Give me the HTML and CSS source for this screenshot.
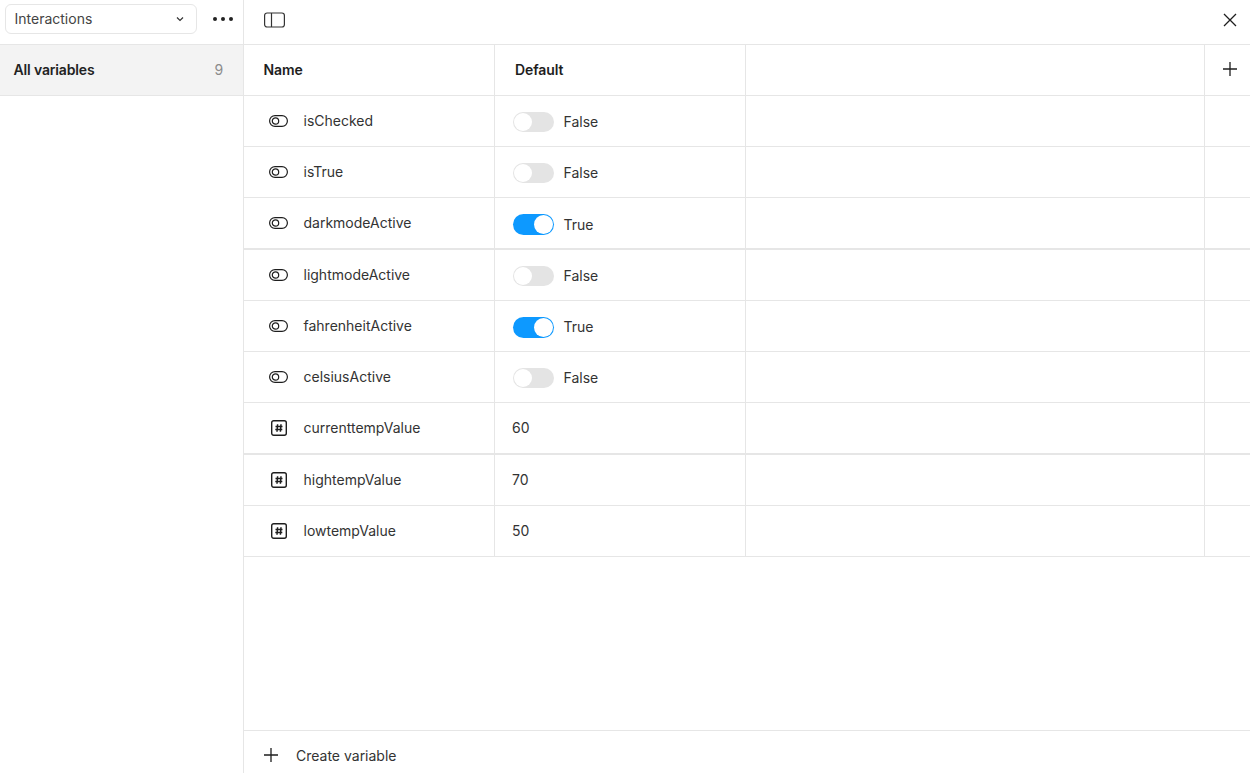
FILE: index.html
```html
<!DOCTYPE html>
<html lang="en">
<head>
<meta charset="utf-8">
<title>Variables</title>
<link rel="stylesheet" href="styles.css">
</head>
<body>
<svg class="defs" width="0" height="0" aria-hidden="true">
  <symbol id="i-bool" viewBox="0 0 19 12"><rect x=".6" y=".6" width="17.8" height="10.8" rx="5.4" fill="none" stroke="currentColor" stroke-width="1.2"/><circle cx="6.5" cy="6" r="3.2" fill="none" stroke="currentColor" stroke-width="1.2"/></symbol>
  <symbol id="i-num" viewBox="0 0 16 16"><rect x=".7" y=".7" width="14.6" height="14.6" rx="2" fill="none" stroke="currentColor" stroke-width="1.4"/><path d="M6.6 4.2 6 11.8M10 4.2l-.6 7.6M4.5 6.5h7M4.3 9.5h7" fill="none" stroke="currentColor" stroke-width="1.5"/></symbol>
  <symbol id="i-plus" viewBox="0 0 14 14"><path d="M7 0v14M0 7h14" fill="none" stroke="currentColor" stroke-width="1.3"/></symbol>
</svg>
<div class="app">
  <aside class="side">
    <div class="side-top">
      <button class="select"><span>Interactions</span>
        <svg width="8" height="6" viewBox="0 0 8 6"><path d="M1 1.5 4 4.5 7 1.5" fill="none" stroke="#333" stroke-width="1.2"/></svg>
      </button>
      <div class="dots"><i></i><i></i><i></i></div>
    </div>
    <div class="side-item"><span>All variables</span><span class="count">9</span></div>
  </aside>
  <main class="main">
    <div class="topbar">
      <svg width="21" height="16" viewBox="0 0 21 16"><rect x=".6" y="1" width="19.8" height="14" rx="2.5" fill="none" stroke="#333" stroke-width="1.2"/><path d="M7.5 1v14" stroke="#333" stroke-width="1.2"/></svg>
      <svg width="14" height="14" viewBox="0 0 14 14"><path d="M1 1l12 12M13 1 1 13" fill="none" stroke="#1e1e1e" stroke-width="1.3"/></svg>
    </div>
    <div class="table">
      <div class="row head">
        <div class="c-name">Name</div><div class="c-def">Default</div><div class="c-fill"></div>
        <div class="c-add"><svg class="plus" width="14" height="14"><use href="#i-plus"/></svg></div>
      </div>
      <div class="row"><div class="c-name"><svg class="ib" width="19" height="12"><use href="#i-bool"/></svg>isChecked</div><div class="c-def"><span class="tog"></span><span class="val">False</span></div><div class="c-fill"></div><div class="c-add"></div></div>
      <div class="row"><div class="c-name"><svg class="ib" width="19" height="12"><use href="#i-bool"/></svg>isTrue</div><div class="c-def"><span class="tog"></span><span class="val">False</span></div><div class="c-fill"></div><div class="c-add"></div></div>
      <div class="row thick"><div class="c-name"><svg class="ib" width="19" height="12"><use href="#i-bool"/></svg>darkmodeActive</div><div class="c-def"><span class="tog on"></span><span class="val">True</span></div><div class="c-fill"></div><div class="c-add"></div></div>
      <div class="row"><div class="c-name"><svg class="ib" width="19" height="12"><use href="#i-bool"/></svg>lightmodeActive</div><div class="c-def"><span class="tog"></span><span class="val">False</span></div><div class="c-fill"></div><div class="c-add"></div></div>
      <div class="row"><div class="c-name"><svg class="ib" width="19" height="12"><use href="#i-bool"/></svg>fahrenheitActive</div><div class="c-def"><span class="tog on"></span><span class="val">True</span></div><div class="c-fill"></div><div class="c-add"></div></div>
      <div class="row"><div class="c-name"><svg class="ib" width="19" height="12"><use href="#i-bool"/></svg>celsiusActive</div><div class="c-def"><span class="tog"></span><span class="val">False</span></div><div class="c-fill"></div><div class="c-add"></div></div>
      <div class="row thick"><div class="c-name"><svg class="in" width="16" height="16"><use href="#i-num"/></svg>currenttempValue</div><div class="c-def num">60</div><div class="c-fill"></div><div class="c-add"></div></div>
      <div class="row"><div class="c-name"><svg class="in" width="16" height="16"><use href="#i-num"/></svg>hightempValue</div><div class="c-def num">70</div><div class="c-fill"></div><div class="c-add"></div></div>
      <div class="row"><div class="c-name"><svg class="in" width="16" height="16"><use href="#i-num"/></svg>lowtempValue</div><div class="c-def num">50</div><div class="c-fill"></div><div class="c-add"></div></div>
    </div>
    <div class="foot"><svg class="plus" width="14" height="14"><use href="#i-plus"/></svg><span>Create variable</span></div>
  </main>
</div>
</body>
</html>
```
FILE: styles.css
```css
* { box-sizing: border-box; }
html, body { margin: 0; height: 100%; }
body { font-family: Inter, "Liberation Sans", sans-serif; font-size: 14px; color: #333; background: #fff; overflow: hidden; }
.defs { position: absolute; }
.app { display: flex; height: 773px; }
.side { width: 244px; flex: none; border-right: 1px solid #e6e6e6; }
.side-top { height: 45px; border-bottom: 1px solid #e6e6e6; display: flex; align-items: flex-start; padding: 4px 0 0 5px; }
.select { width: 192px; height: 30px; border: 1px solid #e6e6e6; border-radius: 6px; background: #fff; display: flex; align-items: center; justify-content: space-between; padding: 0 12px 2px 8.5px; font: inherit; color: #444; }
.select svg { margin-top: 2px; }
.dots { display: flex; gap: 4px; margin: 13px 0 0 15.5px; }
.dots i { width: 4px; height: 4px; border-radius: 50%; background: #222; }
.side-item { height: 51px; background: #f3f3f3; border-bottom: 1px solid #e6e6e6; display: flex; align-items: center; justify-content: space-between; padding: 0 20px 2px 13.5px; font-weight: 600; color: #222; letter-spacing: -.15px; }
.count { font-weight: 400; color: #8c8c8c; }
.main { flex: 1; display: flex; flex-direction: column; min-width: 0; }
.topbar { height: 45px; border-bottom: 1px solid #e6e6e6; display: flex; align-items: center; justify-content: space-between; padding: 0 13px 4px 20px; flex: none; }
.table { flex: 1; }
.row { display: flex; height: 51px; border-bottom: 1px solid #e6e6e6; }
.row.thick { height: 52px; border-bottom-width: 2px; }
.row > div { display: flex; align-items: center; }
.c-name { width: 251px; border-right: 1px solid #e6e6e6; padding-left: 25px; flex: none; }
.c-def { width: 251px; border-right: 1px solid #e6e6e6; padding-left: 18px; flex: none; padding-top: 2px; }
.c-fill { flex: 1; border-right: 1px solid #e6e6e6; }
.c-add { width: 45px; flex: none; justify-content: center; }
.head { font-weight: 600; color: #1e1e1e; letter-spacing: -.1px; }
.head > div { padding-bottom: 2px; }
.head .c-name { padding-left: 19.5px; }
.head .c-def { padding-left: 20px; padding-top: 0; }
.head .plus { margin-left: 4px; }
.plus { color: #1e1e1e; }
.row:not(.head) .c-name { padding-bottom: 2px; }
.ib { margin-right: 15.5px; margin-top: 2px; color: #1e1e1e; }
.in { margin-right: 16.5px; margin-left: 2px; margin-top: 2px; color: #1e1e1e; }
.tog { width: 41px; height: 20px; border-radius: 11px; background: #e4e4e4; position: relative; margin-right: 9.5px; }
.tog::after { content: ""; position: absolute; left: 1px; top: 1px; width: 18px; height: 18px; border-radius: 50%; background: #fff; }
.tog.on { height: 21px; background: #0d99ff; }
.tog.on::after { left: 21px; width: 19px; height: 19px; }
.val { margin-bottom: 2px; }
.thick .val { margin-bottom: 0; }
.num { padding-left: 17px; padding-top: 0 !important; padding-bottom: 1px; }
.foot { height: 43px; border-top: 1px solid #e6e6e6; display: flex; align-items: center; padding: 5px 0 0 20px; gap: 18px; flex: none; }
.foot span { padding-top: 1px; }
```
